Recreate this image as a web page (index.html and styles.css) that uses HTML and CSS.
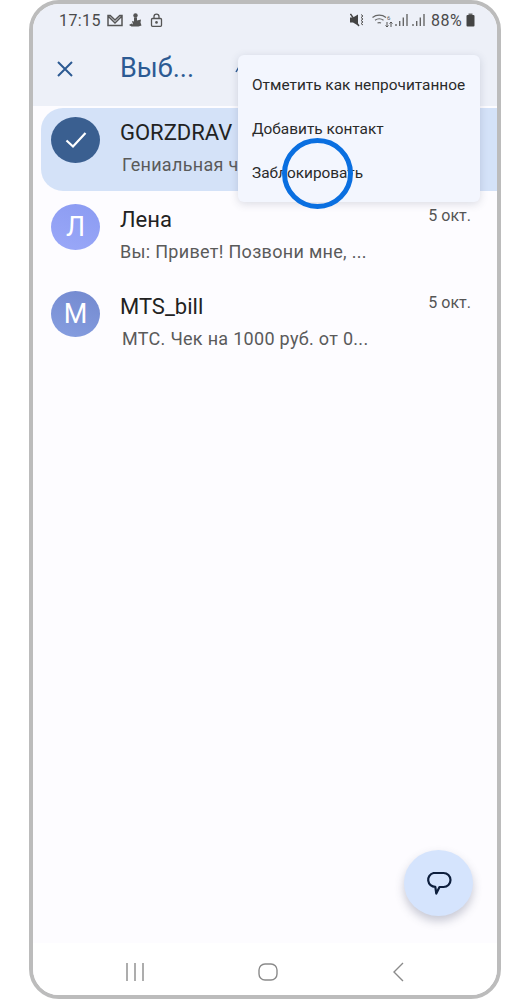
FILE: index.html
```html
<!DOCTYPE html>
<html lang="ru">
<head>
<meta charset="utf-8">
<title>Сообщения</title>
<link rel="stylesheet" href="styles.css">
</head>
<body>
<div class="phone">
  <div class="top">
    <div class="status">
      <div class="status-left">
        <span class="time">17:15</span>
        <svg class="si" width="16" height="13" viewBox="0 0 16 13"><path d="M1 1.500h2.200L8 6l4.800-4.500H15v10H1z M1.500 2.500L8 9l6.500-6.500" fill="none" stroke="#555" stroke-width="1.500"/></svg>
        <svg class="si" width="13" height="14" viewBox="0 0 13 14"><circle cx="6.500" cy="2.500" r="2.200" fill="#555"/><path d="M5 4.500h3v3l4-1-.5 3 1 3-3 1H2.500L0 12l2.500-1.500 1.500 1L3 8l2 .5z" fill="#555"/></svg>
        <svg class="si lock" width="13" height="14" viewBox="0 0 13 14"><path d="M4 5.500V3.600a2.500 2.500 0 0 1 5 0v1.900" fill="none" stroke="#555" stroke-width="1.300"/><rect x="1.500" y="5.500" width="10" height="7.800" rx="1" fill="none" stroke="#555" stroke-width="1.300"/><circle cx="6.500" cy="9.400" r="1.300" fill="#555"/></svg>
      </div>
      <div class="status-right">
        <svg class="si mute" width="15" height="14" viewBox="0 0 15 14"><path d="M0 4.500h3L8 1.500v11l-5-3H0z" fill="#444"/><path d="M.5 1l8.500 12" stroke="#444" stroke-width="1.300" fill="none"/><path d="M11 1.500l2 1.500-2 1.500 2 1.500-2 1.500 2 1.500-2 1.500 2 1.500" fill="none" stroke="#555" stroke-width="1"/></svg>
        <svg class="si wifi" width="21" height="14" viewBox="0 0 21 14"><path d="M.5 4.500a11 11 0 0 1 13.500 0M3 7.200a7.500 7.500 0 0 1 8.500 0M5.500 10a4 4 0 0 1 3.500 0" fill="none" stroke="#666" stroke-width="1.200"/><path d="M15 9v5M19 9v5M13.500 12.500L15 14l1.500-1.500M17.500 10.500L19 9l1.500 1.500" fill="none" stroke="#555" stroke-width="1"/><text x="15" y="6.500" class="wifi-six">6</text></svg>
        <svg class="si sig" width="13" height="14" viewBox="0 0 13 14"><path d="M1 13v-2M4.700 13V8M8.300 13V4.500M12 13V1" stroke="#666" stroke-width="1.400" fill="none"/></svg>
        <svg class="si sig2" width="13" height="14" viewBox="0 0 13 14"><path d="M1 13v-2M4.700 13V8M8.300 13V4.500M12 13V1" stroke="#666" stroke-width="1.400" fill="none"/></svg>
        <span class="pct">88%</span>
        <svg class="si" width="9" height="14" viewBox="0 0 9 14"><rect x="2.500" y="0.500" width="4" height="2" fill="#666"/><rect x="0.500" y="2" width="8" height="11.500" rx="1" fill="#444"/></svg>
      </div>
    </div>
    <div class="appbar">
      <svg class="close" width="16" height="16" viewBox="0 0 16 16"><path d="M1 1l14 14M15 1L1 15" stroke="#2c5a93" stroke-width="2" fill="none"/></svg>
      <span class="title">Выб...</span>
      <svg class="peek" width="6" height="10" viewBox="0 0 6 10"><path d="M5 1L1 8" stroke="#2c5a93" stroke-width="1.500" fill="none"/></svg>
    </div>
  </div>
  <div class="list">
    <div class="row selected">
      <div class="avatar av-check"><svg width="22" height="18" viewBox="0 0 22 18"><path d="M1.500 9.500l6.500 6L20.500 2" fill="none" stroke="#fff" stroke-width="2.200"/></svg></div>
      <div class="body">
        <div class="name">GORZDRAV</div>
        <div class="msg msg-shift">Гениальная ч</div>
      </div>
    </div>
    <div class="row">
      <div class="avatar av-l">Л</div>
      <div class="body">
        <div class="line"><span class="name">Лена</span><span class="date">5 окт.</span></div>
        <div class="msg">Вы: Привет! Позвони мне, ...</div>
      </div>
    </div>
    <div class="row">
      <div class="avatar av-m">М</div>
      <div class="body">
        <div class="line"><span class="name">MTS_bill</span><span class="date">5 окт.</span></div>
        <div class="msg msg-shift">МТС. Чек на 1000 руб. от 0...</div>
      </div>
    </div>
  </div>
  <nav class="navbar">
    <svg width="18" height="18" viewBox="0 0 18 18"><path d="M1 0v18M9 0v18M17 0v18" stroke="#8a8a8a" stroke-width="1.400" fill="none"/></svg>
    <svg width="20" height="18" viewBox="0 0 20 18"><rect x="1" y="1" width="18" height="16" rx="6" stroke="#8a8a8a" stroke-width="1.400" fill="none"/></svg>
    <svg width="12" height="20" viewBox="0 0 12 20"><path d="M11 1L2 10l9 9" stroke="#8a8a8a" stroke-width="1.400" fill="none"/></svg>
  </nav>
  <div class="menu">
    <div class="menu-item">Отметить как непрочитанное</div>
    <div class="menu-item">Добавить контакт</div>
    <div class="menu-item">Заблокировать</div>
  </div>
  <div class="ring"></div>
  <div class="fab">
    <svg width="27" height="25" viewBox="0 0 27 25"><path d="M8.500 2h10a6.800 6.800 0 0 1 0 14h-4l-3.200 6.500-1-6.700A7 7 0 0 1 8.500 2z" fill="none" stroke="#0e1f3d" stroke-width="2.200" stroke-linejoin="round"/></svg>
  </div>
</div>
</body>
</html>
```
FILE: styles.css
```css
* { box-sizing: border-box; }
html, body { margin: 0; padding: 0; background: #fff; }
body { font-family: Roboto, "Noto Sans", sans-serif; width: 525px; height: 1000px; overflow: hidden; }
.phone {
  position: relative;
  width: 472px;
  height: 999px;
  margin: 0 0 0 29px;
  border: 4px solid #bcbcbc;
  border-radius: 30px;
  overflow: hidden;
  background: #fdfcff;
  display: flex;
  flex-direction: column;
}
.top { height: 102px; background: #edf0f8; flex: none; }
.status { height: 32px; display: flex; justify-content: space-between; align-items: center; padding: 0 22px 0 26px; }
.status-left, .status-right { display: flex; align-items: center; }
.status-left { gap: 6px; }
.time, .pct { font-size: 16px; color: #4a4a4a; letter-spacing: .4px; }
.pct { margin: 0 4px 0 6px; }
.si { display: block; flex: none; }
.lock { margin-left: 2px; }
.wifi { margin-left: 7px; }
.sig { margin-left: 2px; }
.sig2 { margin-left: 4px; }
.wifi-six { font-size: 6px; fill: #555; font-family: Roboto, sans-serif; }
.appbar { display: flex; align-items: center; height: 66px; padding: 0 0 0 24px; }
.title { font-size: 27px; color: #2c5a93; margin-left: 47px; position: relative; top: -1px; }
.close { flex: none; }
.peek { margin-left: 41px; }
.list { flex: 1; padding: 2px 0 0 8px; background: #fdfcff; }
.row { height: 87px; display: flex; padding: 0 0 0 10px; align-items: flex-start; }
.row.selected { height: 83px; margin-bottom: 4px; background: #d4e2f8; border-radius: 22px 0 0 22px; padding-top: 9px; }
.avatar { width: 49px; height: 46px; border-radius: 50%; flex: none; display: flex; align-items: center; justify-content: center; color: #fff; font-size: 27px; margin-top: 9px; }
.selected .avatar { margin-top: 0; }
.av-check { background: #3a5f90; }
.av-l { background: linear-gradient(20deg, #9aa8f8, #8b9bf2); }
.av-m { background: linear-gradient(20deg, #869ee0, #7389cf); }
.body { flex: 1; margin-left: 20px; padding-right: 26px; }
.selected .body { padding-top: 3px; }
.line { display: flex; justify-content: space-between; align-items: flex-start; }
.name { font-size: 22px; color: #222; line-height: 26px; }
.row:not(.selected) .body { padding-top: 12px; }
.date { font-size: 16px; color: #555; line-height: 18px; }
.msg { font-size: 18px; color: #5a5a5a; margin-top: 8px; line-height: 22px; letter-spacing: .3px; white-space: nowrap; }
.msg-shift { margin-left: 2px; }
.navbar { height: 52px; flex: none; background: #fff; display: flex; justify-content: space-between; align-items: center; padding: 6px 93px 0 93px; }
.menu {
  position: absolute;
  left: 205px;
  top: 51px;
  width: 242px;
  height: 147px;
  padding: 8px 0 6px;
  background: #f3f6fe;
  border-radius: 6px;
  box-shadow: 0 2px 8px rgba(60, 70, 100, .18);
  display: flex;
  flex-direction: column;
}
.menu-item { height: 44px; line-height: 44px; padding-left: 14px; font-size: 15.400px; color: #2a2a2a; white-space: nowrap; }
.ring {
  position: absolute;
  left: 249px;
  top: 134px;
  width: 71px;
  height: 71px;
  border: 5px solid #0a6fe0;
  border-radius: 50%;
}
.fab {
  position: absolute;
  left: 371px;
  top: 846px;
  width: 69px;
  height: 66px;
  border-radius: 50%;
  background: #d5e4fd;
  box-shadow: 0 5px 10px rgba(60, 70, 100, .28);
  display: flex;
  align-items: center;
  justify-content: center;
}
```
